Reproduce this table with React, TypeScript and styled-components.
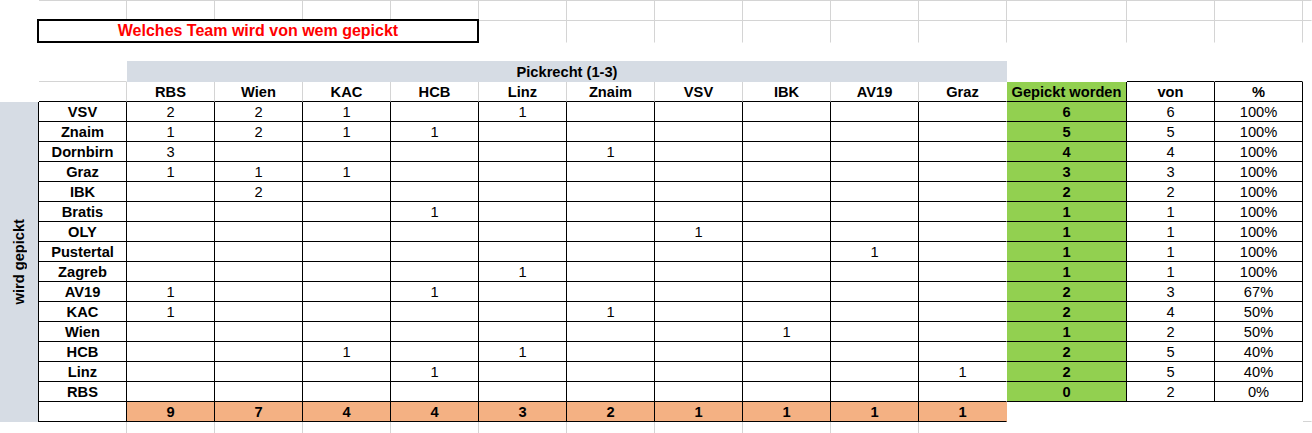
import styled, { createGlobalStyle } from "styled-components";

type Line = "none" | "light" | "black";

const LIGHT = "#d4d4d4";
const lineColor = (l?: Line) =>
  l === "black" ? "#000" : l === "light" ? LIGHT : "transparent";

const GlobalStyle = createGlobalStyle`
  html, body {
    margin: 0;
    padding: 0;
    background: #fff;
  }
  body {
    font-family: "Liberation Sans", Arial, sans-serif;
    font-size: 14.67px;
    color: #000;
  }
`;

const teams = ["RBS", "Wien", "KAC", "HCB", "Linz", "Znaim", "VSV", "IBK", "AV19", "Graz"];

const rows: { name: string; picks: (number | null)[]; got: number; of: number; pct: string }[] = [
  { name: "VSV", picks: [2, 2, 1, null, 1, null, null, null, null, null], got: 6, of: 6, pct: "100%" },
  { name: "Znaim", picks: [1, 2, 1, 1, null, null, null, null, null, null], got: 5, of: 5, pct: "100%" },
  { name: "Dornbirn", picks: [3, null, null, null, null, 1, null, null, null, null], got: 4, of: 4, pct: "100%" },
  { name: "Graz", picks: [1, 1, 1, null, null, null, null, null, null, null], got: 3, of: 3, pct: "100%" },
  { name: "IBK", picks: [null, 2, null, null, null, null, null, null, null, null], got: 2, of: 2, pct: "100%" },
  { name: "Bratis", picks: [null, null, null, 1, null, null, null, null, null, null], got: 1, of: 1, pct: "100%" },
  { name: "OLY", picks: [null, null, null, null, null, null, 1, null, null, null], got: 1, of: 1, pct: "100%" },
  { name: "Pustertal", picks: [null, null, null, null, null, null, null, null, 1, null], got: 1, of: 1, pct: "100%" },
  { name: "Zagreb", picks: [null, null, null, null, 1, null, null, null, null, null], got: 1, of: 1, pct: "100%" },
  { name: "AV19", picks: [1, null, null, 1, null, null, null, null, null, null], got: 2, of: 3, pct: "67%" },
  { name: "KAC", picks: [1, null, null, null, null, 1, null, null, null, null], got: 2, of: 4, pct: "50%" },
  { name: "Wien", picks: [null, null, null, null, null, null, null, 1, null, null], got: 1, of: 2, pct: "50%" },
  { name: "HCB", picks: [null, null, 1, null, 1, null, null, null, null, null], got: 2, of: 5, pct: "40%" },
  { name: "Linz", picks: [null, null, null, 1, null, null, null, null, null, 1], got: 2, of: 5, pct: "40%" },
  { name: "RBS", picks: [null, null, null, null, null, null, null, null, null, null], got: 0, of: 2, pct: "0%" },
];

const totals = [9, 7, 4, 4, 3, 2, 1, 1, 1, 1];

const Sheet = styled.div`
  display: grid;
  grid-template-columns: 39px repeat(11, 88px) 120px 88px 88px 9px;
  grid-template-rows: 21px 22px 18px 21px 20px repeat(16, 20px) 20px;
  width: 1312px;
  overflow: hidden;
`;

const Cell = styled.div<{
  $right?: Line;
  $bottom?: Line;
  $top?: boolean;
  $fill?: string;
  $bold?: boolean;
  $span?: number;
}>`
  box-sizing: border-box;
  display: flex;
  align-items: flex-end;
  justify-content: center;
  padding-bottom: 1px;
  min-width: 0;
  white-space: nowrap;
  overflow: hidden;
  grid-column: ${(p) => (p.$span ? `span ${p.$span}` : "auto")};
  background: ${(p) => p.$fill || "transparent"};
  font-weight: ${(p) => (p.$bold ? "bold" : "normal")};
  border-right: 1px solid ${(p) => lineColor(p.$right)};
  border-bottom: 1px solid ${(p) => lineColor(p.$bottom)};
  border-top: ${(p) => (p.$top ? `1px solid ${LIGHT}` : "none")};
`;

const TitleBox = styled.div`
  box-sizing: border-box;
  grid-column: 2 / 7;
  margin: -2px 0 0 -2px;
  border: 2px solid #000;
  background: #fff;
  display: flex;
  align-items: center;
  justify-content: center;
  color: #ff0000;
  font-weight: bold;
  font-size: 16px;
  z-index: 1;
`;

const Band = styled.div`
  grid-column: span 10;
  background: #d6dce4;
  display: flex;
  align-items: center;
  justify-content: center;
  font-weight: bold;
`;

const SideLabel = styled.div`
  box-sizing: border-box;
  grid-column: 1;
  grid-row: 6 / span 16;
  background: #d6dce4;
  border-right: 1px solid #000;
  display: flex;
  align-items: center;
  justify-content: center;
`;

const SideText = styled.span`
  writing-mode: vertical-rl;
  transform: rotate(180deg);
  font-weight: bold;
  white-space: nowrap;
`;

const Empty = styled.div<{ $span?: number }>`
  grid-column: ${(p) => (p.$span ? `span ${p.$span}` : "auto")};
`;

const GREEN = "#92d050";
const ORANGE = "#f4b183";

const App = () => {
  return (
    <>
      <GlobalStyle />
      <Sheet>
        {/* row 1: plain grid */}
        <Empty />
        {Array.from({ length: 14 }).map((_, i) => (
          <Cell key={`r0-${i}`} $top $right="light" $bottom="light" />
        ))}
        <Cell $top $bottom="light" />

        {/* row 2: title */}
        <Empty />
        <TitleBox>Welches Team wird von wem gepickt</TitleBox>
        {Array.from({ length: 9 }).map((_, i) => (
          <Cell key={`r1-${i}`} $right="light" />
        ))}
        <Empty />

        {/* row 3: spacer */}
        <Empty $span={16} />

        {/* row 4: Pickrecht band */}
        <Empty />
        <Cell $bottom="light" />
        <Band>Pickrecht (1-3)</Band>
        <Empty />
        <Cell $bottom="black" />
        <Cell $bottom="black" />
        <Empty />

        {/* row 5: column headers */}
        <Empty />
        <Cell $right="light" $bottom="black" />
        {teams.map((t, i) => (
          <Cell key={t} $bold $right={i < 9 ? "light" : "none"} $bottom="black">
            {t}
          </Cell>
        ))}
        <Cell $bold $fill={GREEN} $right="black" $bottom="black">
          Gepickt worden
        </Cell>
        <Cell $bold $right="black" $bottom="black">
          von
        </Cell>
        <Cell $bold $right="black" $bottom="black">
          %
        </Cell>
        <Empty />

        {/* data rows */}
        <SideLabel>
          <SideText>wird gepickt</SideText>
        </SideLabel>
        {rows.map((r) => [
          <Cell key={`${r.name}-n`} $bold $right="black" $bottom="black">
            {r.name}
          </Cell>,
          ...r.picks.map((v, i) => (
            <Cell key={`${r.name}-${i}`} $right={i < 9 ? "black" : "none"} $bottom="black">
              {v ?? ""}
            </Cell>
          )),
          <Cell key={`${r.name}-g`} $bold $fill={GREEN} $right="black" $bottom="black">
            {r.got}
          </Cell>,
          <Cell key={`${r.name}-v`} $right="black" $bottom="black">
            {r.of}
          </Cell>,
          <Cell key={`${r.name}-p`} $right="black" $bottom="black">
            {r.pct}
          </Cell>,
          <Empty key={`${r.name}-e`} />,
        ])}

        {/* totals row */}
        <Cell $right="black" $bottom="black" />
        {totals.map((v, i) => (
          <Cell key={`t-${i}`} $bold $fill={ORANGE} $right={i < 9 ? "black" : "none"} $bottom="black">
            {v}
          </Cell>
        ))}
        <Empty $span={3} />
        <Cell $bottom="light" />

        {/* row below */}
        <Empty />
        {Array.from({ length: 10 }).map((_, i) => (
          <Cell key={`b-${i}`} $right="light" />
        ))}
        <Empty $span={5} />
      </Sheet>
    </>
  );
};

export default App;
